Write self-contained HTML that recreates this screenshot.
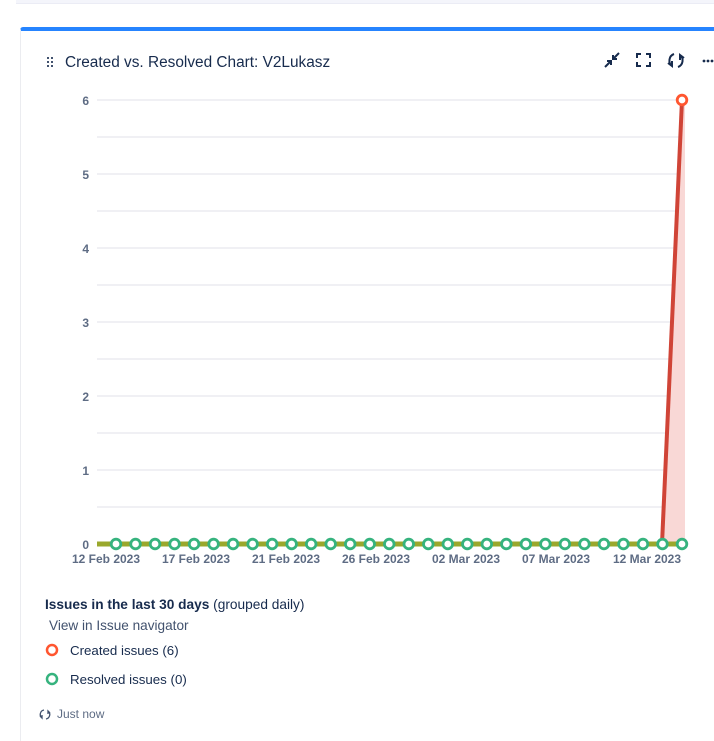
<!DOCTYPE html>
<html><head><style>
body{margin:0;width:714px;height:731px;background:#fff;font-family:"Liberation Sans",sans-serif;position:relative;overflow:hidden}
.top{position:absolute;left:16px;top:0;width:698px;height:3px;background:#f4f5fb;border-bottom:1px solid #ebecf5}
.card{position:absolute;left:20px;top:27px;width:700px;height:710px;border-left:1px solid #ebecf0;border-top:4px solid #2684ff;border-radius:3px 0 0 0}
.t{position:absolute;font-size:13.5px;color:#172b4d}
</style></head><body>
<div class="top"></div>
<div class="card"></div>
<svg width="714" height="731" style="position:absolute;left:0;top:0" font-family="Liberation Sans, sans-serif">
<g fill="#42526e"><rect x="47" y="57" width="2" height="2"/><rect x="51" y="57" width="2" height="2"/><rect x="47" y="61" width="2" height="2"/><rect x="51" y="61" width="2" height="2"/><rect x="47" y="65" width="2" height="2"/><rect x="51" y="65" width="2" height="2"/></g>
<text x="65" y="67" font-size="15.4" fill="#172b4d">Created vs. Resolved Chart: V2Lukasz</text>
<g stroke="#172b4d" stroke-width="2" fill="none">
<path d="M605 67 L611 61 M607 61 H611 V65"/><path d="M619 53 L613 59 M613 55 V59 H617"/>
<path d="M637 58V54H641 M646 54H650V58 M650 62V66H646 M641 66H637V62"/>
<path d="M674 54 A7 7 0 0 0 672 66 M668 63 L672 66 L672 61"/><path d="M678 67 A7 7 0 0 0 680 55 M684 58 L680 55 L680 60"/>
</g>
<g fill="#172b4d"><circle cx="704" cy="61" r="1.4"/><circle cx="708" cy="61" r="1.4"/><circle cx="712" cy="61" r="1.4"/></g>
<g stroke="#ebecf0" stroke-width="1.5">
<line x1="97" x2="685" y1="100" y2="100"/><line x1="97" x2="685" y1="137" y2="137"/><line x1="97" x2="685" y1="174" y2="174"/><line x1="97" x2="685" y1="211" y2="211"/><line x1="97" x2="685" y1="248" y2="248"/><line x1="97" x2="685" y1="285" y2="285"/><line x1="97" x2="685" y1="322" y2="322"/><line x1="97" x2="685" y1="359" y2="359"/><line x1="97" x2="685" y1="396" y2="396"/><line x1="97" x2="685" y1="433" y2="433"/><line x1="97" x2="685" y1="470" y2="470"/><line x1="97" x2="685" y1="507" y2="507"/>
</g>
<g font-size="12" font-weight="bold" fill="#5e6c84" text-anchor="end">
<text x="89" y="105">6</text><text x="89" y="179">5</text><text x="89" y="253">4</text><text x="89" y="327">3</text><text x="89" y="401">2</text><text x="89" y="475">1</text><text x="89" y="549">0</text>
</g>
<polygon points="662,544 682,100 685,100 685,544" fill="#f9d8d6"/>
<line x1="97" x2="682" y1="544" y2="544" stroke="#9aa82c" stroke-width="5"/>
<line x1="662" y1="544" x2="682" y2="100" stroke="#d04437" stroke-width="4"/>
<g fill="#fff" stroke="#36b37e" stroke-width="2.8" id="dots"></g>
<circle cx="682" cy="100" r="4.8" fill="#fff" stroke="#ff5630" stroke-width="2.8"/>
<g font-size="12" font-weight="bold" fill="#5e6c84" text-anchor="middle">
<text x="106" y="563">12 Feb 2023</text><text x="196" y="563">17 Feb 2023</text><text x="286" y="563">21 Feb 2023</text><text x="376" y="563">26 Feb 2023</text><text x="466" y="563">02 Mar 2023</text><text x="556" y="563">07 Mar 2023</text><text x="647" y="563">12 Mar 2023</text>
</g>
<circle cx="52" cy="650" r="5" fill="none" stroke="#ff5630" stroke-width="2.5"/>
<circle cx="52" cy="679" r="5" fill="none" stroke="#36b37e" stroke-width="2.5"/>
<g stroke="#42526e" stroke-width="1.3" fill="none"><path d="M44 710 A4.5 4.5 0 0 0 42 718 M40 716 L42 718 L42 715"/><path d="M46 719 A4.5 4.5 0 0 0 48 711 M50 713 L48 711 L48 714"/></g>
</svg>
<div class="t" style="left:45px;top:597px;font-size:13.7px"><b>Issues in the last 30 days</b> (grouped daily)</div>
<div class="t" style="left:49px;top:618px;color:#42526e;font-size:13.6px">View in Issue navigator</div>
<div class="t" style="left:70px;top:643px;font-size:13.3px">Created issues (6)</div>
<div class="t" style="left:70px;top:672px;font-size:13.3px">Resolved issues (0)</div>
<div class="t" style="left:57px;top:707px;font-size:12px;color:#5e6c84">Just now</div>
<script>
var g=document.getElementById('dots'),s='';
for(var i=0;i<30;i++){var x=116+i*(566/29);s+='<circle cx="'+x+'" cy="544" r="4.8"/>';}
g.innerHTML=s;
</script>
</body></html>
